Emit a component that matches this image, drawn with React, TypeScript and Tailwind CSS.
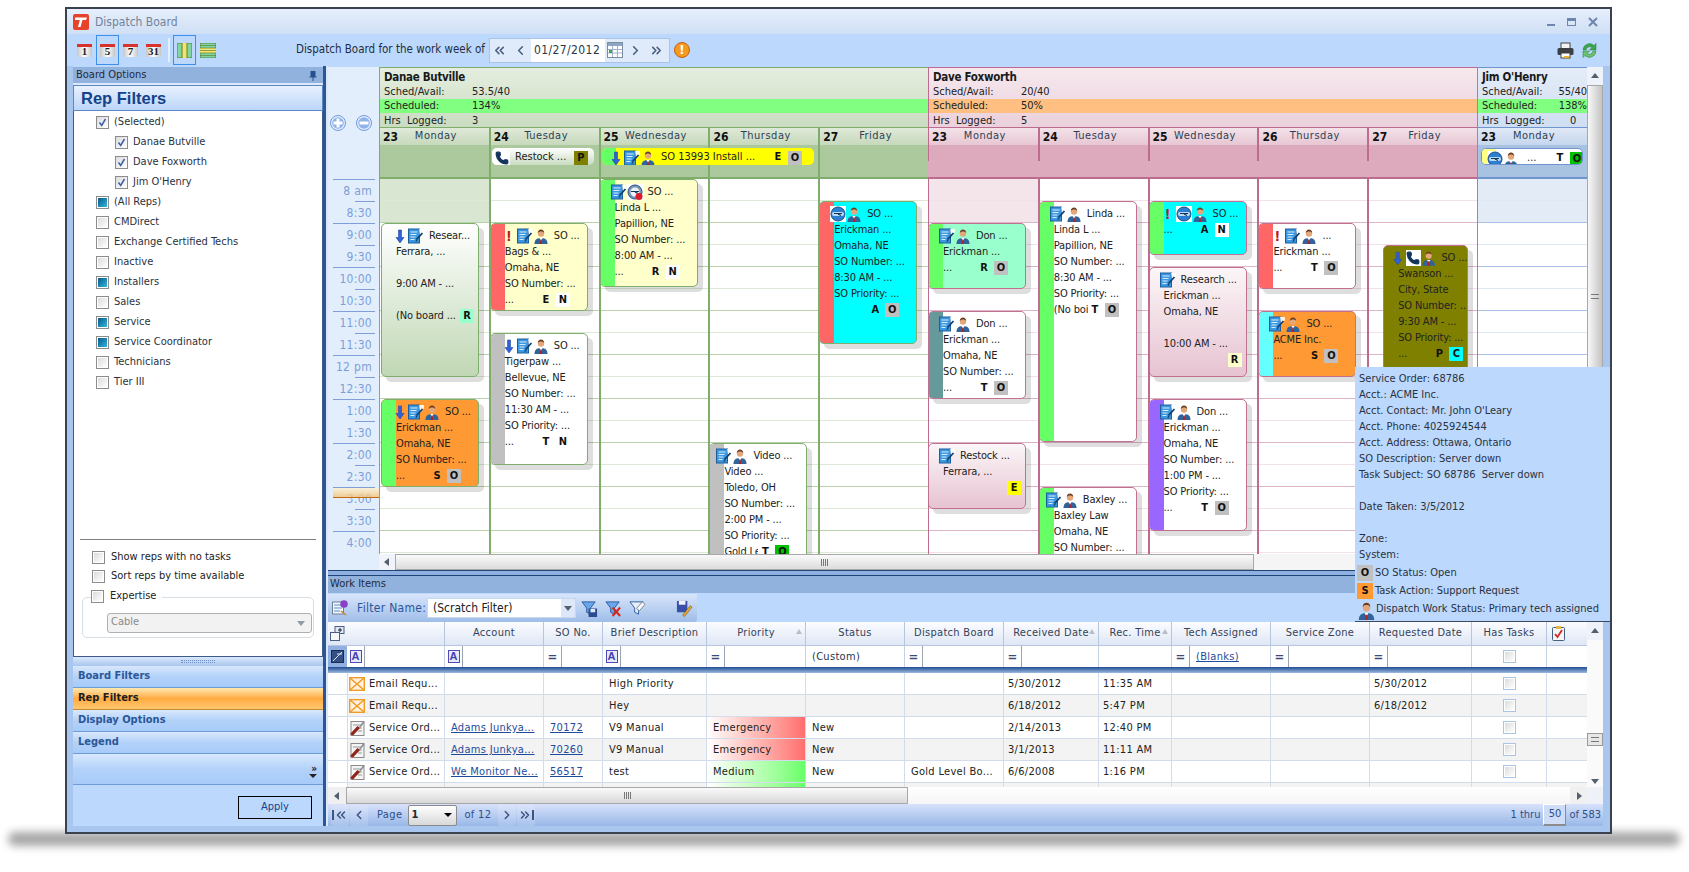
import { ChevronLeft, ChevronRight, ChevronsLeft, ChevronsRight, Phone } from "lucide-react";
import clsx from "clsx";

type Theme = {
  head: string;
  bar: string;
  line: string;
  dayHead: string;
  band: string;
  off: string;
  light: string;
  dark: string;
  border: string;
};

type IconName = "arrow" | "doc" | "person" | "clock" | "clockRed" | "phone" | "bang";

type CardData = {
  slot: number;
  h: number;
  left?: number;
  w?: number;
  fill: string;
  bar?: string;
  icons: IconName[];
  title: string;
  tight?: boolean;
  lines: string[];
  foot?: string;
  letter?: string;
  box: string;
  boxFill: string;
};

const danae: Theme = {
  head: "bg-linear-to-b from-[#e6eedf] to-[#c9dcc0]",
  bar: "bg-[#80ff80]",
  line: "border-[#7fad6b]",
  dayHead: "bg-linear-to-b from-[#dfe9d8] to-[#c4d7b9]",
  band: "bg-[#abc99c]",
  off: "bg-[#d9e6d2]",
  light: "border-[#dde9d6]",
  dark: "border-[#b9d0ad]",
  border: "border-[#7fad6b]",
};

const dave: Theme = {
  head: "bg-linear-to-b from-[#f6e9ee] to-[#ead0db]",
  bar: "bg-[#ffbf80]",
  line: "border-[#bd6b8e]",
  dayHead: "bg-linear-to-b from-[#f3e2e9] to-[#e5c3d0]",
  band: "bg-[#dca9bd]",
  off: "bg-[#f4e5eb]",
  light: "border-[#f1e1e8]",
  dark: "border-[#dcb5c6]",
  border: "border-[#c2708f]",
};

const jim: Theme = {
  head: "bg-linear-to-b from-[#e4ecf8] to-[#cfdef2]",
  bar: "bg-[#80ff80]",
  line: "border-[#6f94cf]",
  dayHead: "bg-linear-to-b from-[#e0e9f6] to-[#c2d4ec]",
  band: "bg-[#a8c3e2]",
  off: "bg-[#e3ebf6]",
  light: "border-[#dfe8f5]",
  dark: "border-[#a9c1e6]",
  border: "border-[#6f94cf]",
};

const white = "bg-white";
const yellow = "bg-[#ffffcc]";
const orange = "bg-[#ff9933]";
const cyan = "bg-[#00ffff]";
const mint = "bg-[#99ffcc]";
const olive = "bg-[#808000]";
const greenFade = "bg-linear-to-b from-white to-[#c0d7b4]";
const pinkFade = "bg-linear-to-b from-[#fbf6f8] to-[#e6c3d1]";
const lime = "bg-[#66ff66]";
const red = "bg-[#ff6666]";
const gray = "bg-[#c0c0c0]";
const boxGray = "bg-[#c0c0c0]";
const boxWhite = "bg-white";

const danaeCards: CardData[][] = [
  [
    { slot: 2, h: 154, left: 1, fill: greenFade, icons: ["arrow", "doc"], title: "Resear...", lines: ["Ferrara, ...", "", "9:00 AM - ...", ""], foot: "(No board ...", box: "R", boxFill: mint },
    { slot: 10, h: 88, left: 1, fill: orange, bar: lime, icons: ["arrow", "doc", "person"], title: "SO ...", lines: ["Erickman ...", "Omaha, NE", "SO Number: ..."], foot: "...", letter: "S", box: "O", boxFill: boxGray },
  ],
  [
    { slot: 2, h: 88, fill: yellow, bar: red, icons: ["bang", "doc", "person"], title: "SO ...", lines: ["Bags & ...", "Omaha, NE", "SO Number: ..."], foot: "...", letter: "E", box: "N", boxFill: boxWhite },
    { slot: 7, h: 132, fill: white, bar: gray, icons: ["arrow", "doc", "person"], title: "SO ...", lines: ["Tigerpaw ...", "Bellevue, NE", "SO Number: ...", "11:30 AM - ...", "SO Priority: ..."], foot: "...", letter: "T", box: "N", boxFill: boxWhite },
  ],
  [
    { slot: 0, h: 108, fill: yellow, bar: lime, icons: ["doc", "clockRed"], title: "SO ...", lines: ["Linda L ...", "Papillion, NE", "SO Number: ...", "8:00 AM - ..."], foot: "...", letter: "R", box: "N", boxFill: boxWhite },
  ],
  [
    { slot: 12, h: 132, fill: white, bar: gray, tight: true, icons: ["doc", "person"], title: "Video ...", lines: ["Video ...", "Toledo, OH", "SO Number: ...", "2:00 PM - ...", "SO Priority: ..."], foot: "Gold Le:", letter: "T", box: "O", boxFill: "bg-[#00c000]" },
  ],
  [
    { slot: 1, h: 143, fill: cyan, bar: red, icons: ["clock", "person"], title: "SO ...", lines: ["Erickman ...", "Omaha, NE", "SO Number: ...", "8:30 AM - ...", "SO Priority: ..."], foot: "", letter: "A", box: "O", boxFill: boxGray },
  ],
];

const daveCards: CardData[][] = [
  [
    { slot: 2, h: 66, fill: mint, bar: lime, icons: ["doc", "person"], title: "Don ...", lines: ["Erickman ..."], foot: "...", letter: "R", box: "O", boxFill: boxGray },
    { slot: 6, h: 88, fill: white, bar: "bg-[#669999]", icons: ["doc", "person"], title: "Don ...", lines: ["Erickman ...", "Omaha, NE", "SO Number: ..."], foot: "...", letter: "T", box: "O", boxFill: boxGray },
    { slot: 12, h: 66, fill: pinkFade, icons: ["doc"], title: "Restock ...", lines: ["Ferrara, ..."], box: "E", boxFill: "bg-[#ffff00]" },
  ],
  [
    { slot: 1, h: 241, fill: white, bar: lime, icons: ["doc", "person"], title: "Linda ...", lines: ["Linda L ...", "Papillion, NE", "SO Number: ...", "8:30 AM - ...", "SO Priority: ..."], foot: "(No boi", letter: "T", box: "O", boxFill: boxGray },
    { slot: 14, h: 88, fill: white, bar: lime, tight: true, icons: ["doc", "person"], title: "Baxley ...", lines: ["Baxley Law", "Omaha, NE", "SO Number: ..."], box: "", boxFill: "" },
  ],
  [
    { slot: 1, h: 54, fill: cyan, bar: lime, icons: ["bang", "clock", "person"], title: "SO ...", lines: [], foot: "...", letter: "A", box: "N", boxFill: boxWhite },
    { slot: 4, h: 110, fill: pinkFade, icons: ["doc"], title: "Research ...", lines: ["Erickman ...", "Omaha, NE", "", "10:00 AM - ..."], box: "R", boxFill: "bg-[#ffffcc]" },
    { slot: 10, h: 132, fill: white, bar: "bg-[#9966ff]", icons: ["doc", "person"], title: "Don ...", lines: ["Erickman ...", "Omaha, NE", "SO Number: ...", "1:00 PM - ...", "SO Priority: ..."], foot: "...", letter: "T", box: "O", boxFill: boxGray },
  ],
  [
    { slot: 2, h: 66, fill: white, bar: red, icons: ["bang", "doc", "person"], title: "...", lines: ["Erickman ..."], foot: "...", letter: "T", box: "O", boxFill: boxGray },
    { slot: 6, h: 66, fill: orange, bar: "bg-[#66ffff]", icons: ["doc", "person"], title: "SO ...", lines: ["ACME Inc."], foot: "...", letter: "S", box: "O", boxFill: boxGray },
  ],
  [
    { slot: 3, h: 132, left: 14, w: 85, fill: olive, tight: true, icons: ["arrow", "phone", "person"], title: "SO ...", lines: ["Swanson ...", "City, State", "SO Number: ...", "9:30 AM - ...", "SO Priority: ..."], foot: "...", letter: "P", box: "C", boxFill: "bg-[#00ffff]" },
  ],
];

const times = ["8 am", "8:30", "9:00", "9:30", "10:00", "10:30", "11:00", "11:30", "12 pm", "12:30", "1:00", "1:30", "2:00", "2:30", "3:00", "3:30", "4:00"];
const reps = [
  { label: "(Selected)", kind: "check", sub: false },
  { label: "Danae Butville", kind: "check", sub: true },
  { label: "Dave Foxworth", kind: "check", sub: true },
  { label: "Jim O'Henry", kind: "check", sub: true },
  { label: "(All Reps)", kind: "fill", sub: false },
  { label: "CMDirect", kind: "none", sub: false },
  { label: "Exchange Certified Techs", kind: "none", sub: false },
  { label: "Inactive", kind: "none", sub: false },
  { label: "Installers", kind: "fill", sub: false },
  { label: "Sales", kind: "none", sub: false },
  { label: "Service", kind: "fill", sub: false },
  { label: "Service Coordinator", kind: "fill", sub: false },
  { label: "Technicians", kind: "none", sub: false },
  { label: "Tier III", kind: "none", sub: false },
];

const gridCols = "grid grid-cols-[19px_98px_99px_59px_104px_99px_99px_99px_95px_73px_99px_99px_102px_75px_40px]";

const columns = [
  { t: "Account" },
  { t: "SO No." },
  { t: "Brief Description" },
  { t: "Priority", sort: true },
  { t: "Status" },
  { t: "Dispatch Board" },
  { t: "Received Date", sort: true },
  { t: "Rec. Time", sort: true },
  { t: "Tech Assigned" },
  { t: "Service Zone" },
  { t: "Requested Date" },
  { t: "Has Tasks" },
];

const workItems = [
  { icon: "mail", type: "Email Requ...", account: "", so: "", brief: "High Priority", priority: "", status: "", board: "", date: "5/30/2012", time: "11:35 AM", req: "5/30/2012" },
  { icon: "mail", type: "Email Requ...", account: "", so: "", brief: "Hey", priority: "", status: "", board: "", date: "6/18/2012", time: "5:47 PM", req: "6/18/2012" },
  { icon: "tool", type: "Service Ord...", account: "Adams Junkya...", so: "70172", brief: "V9 Manual", priority: "Emergency", status: "New", board: "", date: "2/14/2013", time: "12:40 PM", req: "" },
  { icon: "tool", type: "Service Ord...", account: "Adams Junkya...", so: "70260", brief: "V9 Manual", priority: "Emergency", status: "New", board: "", date: "3/1/2013", time: "11:11 AM", req: "" },
  { icon: "tool", type: "Service Ord...", account: "We Monitor Ne...", so: "56517", brief: "test", priority: "Medium", status: "New", board: "Gold Level Bo...", date: "6/6/2008", time: "1:16 PM", req: "" },
  { icon: "tool", type: "", account: "", so: "", brief: "", priority: "Medium", status: "", board: "", date: "", time: "", req: "" },
];

function DocIcon() {
  return (
    <svg viewBox="0 0 16 16" className="h-4 w-4">
      <rect x="0.5" y="1" width="11" height="14" fill="#3b97e0" stroke="#1c5f9e" />
      <path d="M2.5 4h7M2.5 6.5h6M2.5 9h5M2.5 11.5h4" stroke="#d8eefc" />
      <path d="M11 1h5v3l-4 5z" fill="#fff" opacity="0.85" />
      <path d="M8.5 11.5l6-6.5" stroke="#12406e" strokeWidth="1.8" />
      <path d="M7.5 14l.6-2.5 1.8 1.6z" fill="#12406e" />
    </svg>
  );
}

function PersonIcon({ className = "h-4 w-4" }: { className?: string }) {
  return (
    <svg viewBox="0 0 16 16" className={className}>
      <path d="M1.5 16c0-4 2-6 6.5-6s6.500 2 6.500 6z" fill="#2f6399" />
      <path d="M6.300 10h3.400L8 13z" fill="#fff" />
      <path d="M7.400 11.500h1.200l.5 4.500H6.900z" fill="#b3202a" />
      <circle cx="8" cy="5.600" r="3.200" fill="#e3a77c" />
      <path d="M4.800 5c0-2.400 1.400-3.600 3.200-3.600s3.200 1.200 3.200 3.600c-1-1.300-2-1.600-3.200-1.600S5.800 3.700 4.800 5z" fill="#6b3d22" />
    </svg>
  );
}

function ArrowIcon() {
  return (
    <svg viewBox="0 0 16 16" className="h-4 w-4">
      <path d="M6.500 2h3v7.500h2.500L8 15 4 9.500h2.500z" fill="#2e62dc" stroke="#23489c" strokeWidth="0.600" />
    </svg>
  );
}

function ClockIcon({ warn }: { warn?: boolean }) {
  return (
    <svg viewBox="0 0 16 16" className="h-4 w-4">
      <rect width="16" height="16" fill="#fff" />
      <circle cx="8" cy="8" r="7" fill={warn ? "#7e97b4" : "#2c7fd0"} stroke="#1c4f86" />
      {warn ? <circle cx="8" cy="8" r="4.500" fill="#eef3f8" /> : <rect x="2" y="6" width="12" height="4" rx="2" fill="#bcdcf5" />}
      <path d="M4 7.500h8M8 8l3 1.500" stroke="#10365e" strokeWidth="1.200" />
      {warn && <circle cx="12" cy="12.500" r="3.500" fill="#d91d2a" />}
    </svg>
  );
}

function CardIcon({ name }: { name: IconName }) {
  if (name === "doc") return <DocIcon />;
  if (name === "person") return <PersonIcon />;
  if (name === "arrow") return <ArrowIcon />;
  if (name === "clock") return <ClockIcon />;
  if (name === "clockRed") return <ClockIcon warn />;
  if (name === "phone")
    return (
      <span className="flex h-4 w-4 items-center justify-center bg-white">
        <Phone className="h-3.5 w-3.5 fill-[#12365c] text-[#12365c]" />
      </span>
    );
  return <span className="block w-4 text-center text-[14px] leading-4 font-bold text-[#c01818]">!</span>;
}

function Card({ c, theme }: { c: CardData; theme: Theme }) {
  return (
    <div
      className={clsx("absolute overflow-hidden rounded-[5px] border shadow-[5px_5px_0_0_rgba(0,0,0,0.13)]", theme.border, c.fill)}
      style={{ top: c.slot * 22, height: c.h, left: c.left ?? -1, width: c.w ?? 98 }}
    >
      {c.bar && <span className={clsx("absolute inset-y-0 left-0 w-[14px]", c.bar)} />}
      <div className="relative pt-[4px] leading-4 tracking-[-0.15px] whitespace-nowrap text-[#222]">
        <div className={clsx("flex h-4", c.tight ? "pl-[6px]" : "pl-[10px]")}>
          {c.icons.map((name, i) => (
            <CardIcon key={i} name={name} />
          ))}
          <span className="ml-[5px]">{c.title}</span>
        </div>
        {c.lines.map((line, i) => (
          <div key={i} className="h-4 pl-[14px]">
            {line}
          </div>
        ))}
        {c.box && (
          <div className={clsx("flex h-4 items-center", !c.letter && "pr-[4px]")}>
            {c.letter ? (
              <>
                <span className="w-[48px] overflow-hidden pl-[14px]">{c.foot}</span>
                <b className="w-[14px] text-center text-[#111]">{c.letter}</b>
                <span className="w-[3px]" />
              </>
            ) : (
              <span className="flex-1 overflow-hidden pl-[14px]">{c.foot}</span>
            )}
            <b className={clsx("h-[14px] w-[14px] text-center leading-[14px] text-[#111]", c.boxFill)}>{c.box}</b>
          </div>
        )}
      </div>
    </div>
  );
}

function AllDay({ className, bar, children }: { className: string; bar: string; children: React.ReactNode }) {
  return (
    <div className={clsx("absolute top-[3px] flex h-[17px] overflow-hidden rounded-[5px] pt-[2px] whitespace-nowrap text-[#222]", className)}>
      <span className={clsx("absolute inset-y-0 left-0 w-[14px]", bar)} />
      <div className="relative flex h-[15px] items-center">{children}</div>
    </div>
  );
}

function RepColumn({
  theme,
  width,
  name,
  sched,
  pct,
  hrs,
  days,
  cards,
  children,
}: {
  theme: Theme;
  width: string;
  name: string;
  sched: string;
  pct: string;
  hrs: string;
  days: { n: string; d: string }[];
  cards: CardData[][];
  children: React.ReactNode;
}) {
  const wide = width === "w-[110px]" ? "w-[550px]" : "";
  return (
    <div className={clsx("flex shrink-0 flex-col overflow-hidden", width)}>
      <div className={clsx("h-[60px] border-t border-l whitespace-nowrap", theme.line, theme.head)}>
        <div className="h-[17px] pl-[4px] text-[11.500px] leading-[18px] font-bold tracking-[-0.3px] text-[#1a1a1a]">{name}</div>
        <div className="flex h-[14px] pl-[4px] leading-[14px]">
          <span className="w-[88px]">Sched/Avail:</span>
          <span>{sched}</span>
        </div>
        <div className={clsx("flex h-[14px] pl-[4px] leading-[14px]", theme.bar)}>
          <span className="w-[88px]">Scheduled:</span>
          <span>{pct}</span>
        </div>
        <div className="flex h-[15px] pl-[4px] leading-[16px]">
          <span className="w-[88px]">Hrs &nbsp;Logged:</span>
          <span>{hrs}</span>
        </div>
      </div>
      <div className={clsx("grid h-[18px] grid-cols-5 border-t", theme.line, wide)}>
        {days.map((day, i) => (
          <div key={day.n} className={clsx("flex items-center", i === 0 ? "border-l" : "border-l-2", theme.line, theme.dayHead)}>
            <b className="w-0 pl-[3px] text-[12px] whitespace-nowrap text-[#111]">{day.n}</b>
            <span className="flex-1 pb-[2px] text-center tracking-[0.5px] text-[#2d3f55]">{day.d}</span>
          </div>
        ))}
      </div>
      <div className={clsx("relative grid h-[34px] grid-cols-5 border-b-2", theme.line, theme.band, wide)}>
        {days.map((day, i) => (
          <div key={day.n} className={clsx(i === 0 ? "border-l" : "border-l-2", theme.line)} />
        ))}
        {children}
      </div>
      <div className={clsx("grid h-[375px] grid-cols-5 overflow-hidden bg-white", wide)}>
        {days.map((day, i) => (
          <div key={day.n} className={clsx("relative", i === 0 ? "border-l" : "border-l-2", theme.line)}>
            {times.map((t, r) => (
              <div
                key={t}
                className={clsx(
                  "h-[22px] border-b",
                  r % 2 ? theme.dark : theme.light,
                  i === 0 && r < 2 && theme.off
                )}
              />
            ))}
            {(cards[i] || []).map((c, k) => (
              <Card key={k} c={c} theme={theme} />
            ))}
          </div>
        ))}
      </div>
    </div>
  );
}

function CalendarIcon({ text }: { text: string }) {
  return (
    <div className="w-[15px]">
      <div className="h-[3px] bg-[#d8322c]" />
      <div className="flex h-[10px] items-center justify-center bg-linear-to-r from-[#c6c6c6] via-white to-[#c6c6c6] [font-family:'Liberation_Serif',serif] text-[11px] font-bold text-[#222]">
        {text}
      </div>
    </div>
  );
}

function ToolBox({ on, children }: { on?: boolean; children: React.ReactNode }) {
  return (
    <div className={clsx("flex h-[30px] w-[23px] items-center justify-center", on && "border border-[#3f8fe6]")}>{children}</div>
  );
}

function Check({ kind }: { kind: string }) {
  return (
    <span className="flex h-[13px] w-[13px] shrink-0 items-center justify-center border border-[#8c8c8c] bg-white">
      {kind === "fill" && <span className="h-[9px] w-[9px] bg-linear-to-br from-[#0d5b8f] to-[#2fb6dc]" />}
      {kind === "none" && <span className="h-[9px] w-[9px] bg-linear-to-br from-[#dcdcdc] to-white" />}
      {kind === "check" && (
        <svg viewBox="0 0 11 11" className="h-[11px] w-[11px] bg-linear-to-br from-[#dcdcdc] to-white">
          <path d="M2.500 5.500l2.200 3L8.500 2" fill="none" stroke="#3c5ea8" strokeWidth="1.500" />
        </svg>
      )}
    </span>
  );
}

function BlueCheck() {
  return (
    <span className="flex h-[13px] w-[13px] items-center justify-center border border-[#a9c4e4] bg-white">
      <span className="h-[9px] w-[9px] bg-linear-to-br from-[#dcdcdc] to-white" />
    </span>
  );
}

function Triangle({ dir, className }: { dir: "up" | "down" | "left" | "right"; className?: string }) {
  const d = { up: "M0 6h8L4 1z", down: "M0 2h8L4 7z", left: "M6 0v8L1 4z", right: "M2 0v8l5-4z" }[dir];
  return (
    <svg viewBox="0 0 8 8" className={clsx("h-2 w-2", className)}>
      <path d={d} fill="#55606e" />
    </svg>
  );
}

function Grip() {
  return (
    <span className="flex gap-px">
      <i className="h-[7px] w-px bg-[#777]" />
      <i className="h-[7px] w-px bg-[#777]" />
      <i className="h-[7px] w-px bg-[#777]" />
      <i className="h-[7px] w-px bg-[#777]" />
    </span>
  );
}

function MailIcon() {
  return (
    <svg viewBox="0 0 16 14" className="h-[14px] w-[16px] shrink-0">
      <rect x="0.700" y="0.700" width="14.600" height="12.600" fill="#fff3e0" stroke="#f09a28" strokeWidth="1.400" />
      <path d="M1 1l14 12M15 1L1 13" stroke="#f09a28" strokeWidth="1.600" />
    </svg>
  );
}

function ToolIcon() {
  return (
    <svg viewBox="0 0 16 16" className="h-4 w-4 shrink-0">
      <rect x="2" y="1.500" width="13" height="14" fill="#f4f4f4" stroke="#8a8a8a" />
      <path d="M4 5h9M7 8h6M9 11h4" stroke="#999" />
      <path d="M1 14l3 1.500 7-7.500-2.500-2z" fill="#8f2418" />
      <path d="M10 7l4-5.500 1.500 1L11 8z" fill="#8a8f96" />
    </svg>
  );
}

function FunnelIcon({ mark }: { mark: "disk" | "x" | "erase" }) {
  return (
    <svg viewBox="0 0 18 18" className="h-[17px] w-[17px]">
      <path d="M1 2h14L10 8.500V15l-4-2V8.500z" fill={mark === "erase" ? "#e8eef8" : "#6aa6e8"} stroke="#2b5a9e" />
      {mark === "disk" && (
        <>
          <rect x="8" y="9" width="9" height="9" fill="#2b4a8f" />
          <rect x="10" y="9.500" width="5" height="3.500" fill="#dfe9f8" />
        </>
      )}
      {mark === "x" && <path d="M8 8l8 9M16 8l-8 9" stroke="#d8281c" strokeWidth="2.200" />}
      {mark === "erase" && <path d="M8 9l6-7 3 2.500-6 7z" fill="#f8f8f8" stroke="#7a8794" />}
    </svg>
  );
}

function AButton() {
  return (
    <span className="flex h-[13px] w-[12px] items-center justify-center border border-[#4d4db5] bg-[#e8e8fa] [font-family:'Liberation_Sans',sans-serif] text-[11px] leading-none text-[#3f3fb0]">
      A
    </span>
  );
}

function OpCell({ a, children }: { a?: boolean; children?: React.ReactNode }) {
  return (
    <div className="flex h-full min-w-0 border-r border-[#c5d2e4]">
      <span className="flex w-[18px] shrink-0 items-center justify-center border-r border-[#9aa5b3] text-[13px] font-bold text-[#3b4a7a]">
        {a ? <AButton /> : "="}
      </span>
      <span className="pl-[6px] leading-[21px]">{children}</span>
    </div>
  );
}

function NavCell({ children, className }: { children?: React.ReactNode; className?: string }) {
  return <span className={clsx("flex h-[21px] w-[18px] items-center justify-center rounded-[2px] bg-white/15 text-[#3c5580]", className)}>{children}</span>;
}

export default function App() {
  return (
    <div className="relative h-[872px] w-[1689px] overflow-hidden bg-white [font-family:'DejaVu_Sans_Condensed','DejaVu_Sans',sans-serif] text-[11px] [font-stretch:condensed] text-[#222]">
      <div className="absolute top-[832px] left-[8px] h-[14px] w-[1672px] rounded-full bg-[#a6a6a6] blur-[4px]" />

      <div className="relative mt-[7px] ml-[65px] flex h-[827px] w-[1547px] flex-col border-2 border-[#39424e] bg-[#a9c6ee]">
        {/* title bar */}
        <div className="flex h-[25px] shrink-0 items-center bg-linear-to-b from-[#e6effb] to-[#cfdff5] pr-[12px] pl-[6px]">
          <svg viewBox="0 0 16 16" className="h-[16px] w-[16px]">
            <rect width="16" height="16" rx="2" fill="#e8432a" />
            <path d="M2 3.500h12l-1 2.500H9.500L7.500 13H5l1.800-7H2z" fill="#fff" />
          </svg>
          <span className="ml-[6px] text-[12px] text-[#71839b]">Dispatch Board</span>
          <div className="ml-auto flex items-center gap-[12px] text-[#6c86ad]">
            <span className="mt-[6px] h-[2px] w-[8px] bg-[#6c86ad]" />
            <span className="h-[8px] w-[9px] border border-t-[3px] border-[#6c86ad]" />
            <svg viewBox="0 0 10 10" className="h-[10px] w-[10px]">
              <path d="M1 1l8 8M9 1L1 9" stroke="#6c86ad" strokeWidth="2" />
            </svg>
          </div>
        </div>

        {/* toolbar */}
        <div className="flex h-[32px] shrink-0 items-center bg-[#bcd9fd] pr-[12px] pl-[6px]">
          <ToolBox><CalendarIcon text="1" /></ToolBox>
          <ToolBox on><CalendarIcon text="5" /></ToolBox>
          <ToolBox><CalendarIcon text="7" /></ToolBox>
          <ToolBox><CalendarIcon text="31" /></ToolBox>
          <span className="mx-[3px] h-[24px] w-[2px] bg-[#e4effd]" />
          <ToolBox on>
            <svg viewBox="0 0 15 15" className="h-[15px] w-[15px]">
              <rect width="15" height="15" fill="#7fd6a0" stroke="#5f7f3a" />
              <rect x="5" width="5" height="15" fill="#f3e36c" />
              <path d="M5 0v15M10 0v15" stroke="#5f7f3a" />
            </svg>
          </ToolBox>
          <ToolBox>
            <svg viewBox="0 0 16 15" className="h-[15px] w-[16px]">
              <rect width="16" height="15" fill="#7fd6a0" stroke="#5f7f3a" />
              <rect y="5" width="16" height="5" fill="#f3e36c" />
              <path d="M0 2.500h16M0 5h16M0 7.500h16M0 10h16M0 12.500h16" stroke="#5f7f3a" strokeWidth="0.700" />
            </svg>
          </ToolBox>
          <span className="ml-[77px] text-[11.500px] text-[#1f2d3d]">Dispatch Board for the work week of</span>
          <div className="ml-[4px] flex h-[25px] w-[181px] items-center border border-[#a9c4e8] bg-[#dfeafa] text-[#4a5f80]">
            <ChevronsLeft className="ml-[2px] h-[15px] w-[15px]" strokeWidth={2.500} />
            <ChevronLeft className="ml-[6px] h-[15px] w-[15px]" strokeWidth={2.500} />
            <span className="ml-[3px] flex h-full w-[74px] items-center bg-white pl-[3px] text-[12px] tracking-[0.4px] text-[#2a3646]">01/27/2012</span>
            <svg viewBox="0 0 16 16" className="ml-[2px] h-[16px] w-[16px]">
              <rect x="0.500" y="0.500" width="15" height="15" fill="#fff" stroke="#7c8ca3" />
              <rect x="1" y="1" width="14" height="3" fill="#8ea6c6" />
              <path d="M5.500 4v11M10.500 4v11M1 7.500h14M1 11h14" stroke="#9fb2cc" />
              <rect x="2" y="8" width="3" height="3" fill="#35b040" />
            </svg>
            <ChevronRight className="ml-[5px] h-[15px] w-[15px]" strokeWidth={2.500} />
            <ChevronsRight className="ml-[6px] h-[15px] w-[15px]" strokeWidth={2.500} />
          </div>
          <span className="ml-[4px] flex h-[16px] w-[16px] items-center justify-center rounded-full border border-[#c45f10] bg-[#f59a1d] text-[13px] font-bold text-white">!</span>
          <div className="ml-auto flex items-center gap-[7px]">
            <svg viewBox="0 0 17 17" className="h-[17px] w-[17px]">
              <rect x="4" y="1" width="9" height="6" fill="#f3f3f3" stroke="#444" />
              <rect x="0.500" y="6" width="16" height="7" rx="1.500" fill="#3c3f44" />
              <rect x="4" y="11" width="9" height="5" fill="#fff" stroke="#444" />
              <rect x="7" y="14" width="5" height="2" fill="#e6b22e" />
            </svg>
            <svg viewBox="0 0 17 17" className="h-[17px] w-[17px]">
              <path d="M2 8a6.500 6.500 0 0 1 11-4.500L15 1.500V8H8.500l2.500-2.500A3.800 3.800 0 0 0 5 8z" fill="#3ea650" stroke="#1f7a34" strokeWidth="0.500" />
              <path d="M15 9a6.500 6.500 0 0 1-11 4.500L2 15.500V9h6.500L6 11.500A3.800 3.800 0 0 0 12 9z" fill="#6cc272" stroke="#1f7a34" strokeWidth="0.500" />
            </svg>
          </div>
        </div>

        {/* main */}
        <div className="relative flex h-[760px] shrink-0 pr-[7px] pl-[6px]">
          {/* left panel */}
          <div className="flex w-[250px] shrink-0 flex-col bg-[#bcd9fd] pt-px">
            <div className="flex h-[16px] items-center justify-between bg-[#92b2de] pr-[6px] pl-[3px] text-[#1d2a3a]">
              <span>Board Options</span>
              <svg viewBox="0 0 8 11" className="h-[11px] w-[8px]">
                <path d="M1.500 1h5v5.500H7.500V7.500H4.500V11H3.500V7.500H.5V6.500h1z" fill="#26508c" />
              </svg>
            </div>
            <div className="h-[2px] bg-[#dde9fb]" />
            <div className="flex h-[26px] items-center border border-[#5e88c4] bg-linear-to-b from-[#e8f1fe] to-[#bcd6f8] pl-[7px] [font-family:'Liberation_Sans',sans-serif] text-[16.500px] font-bold text-[#15428b]">
              Rep Filters
            </div>
            <div className="flex h-[546px] flex-col border-x border-b border-[#3e5a8a] bg-white pt-px">
              <div className="flex-1">
                {reps.map((r) => (
                  <div key={r.label} className={clsx("flex h-[20px] items-center gap-[5px]", r.sub ? "pl-[41px]" : "pl-[22px]")}>
                    <Check kind={r.kind} />
                    <span className="text-[#2a3140]">{r.label}</span>
                  </div>
                ))}
              </div>
              <div className="mx-[6px] h-px bg-[#808080]" />
              <div className="pt-[8px] pl-[18px]">
                <div className="flex h-[19px] items-center gap-[6px]"><Check kind="none" /><span>Show reps with no tasks</span></div>
                <div className="flex h-[19px] items-center gap-[6px]"><Check kind="none" /><span>Sort reps by time available</span></div>
              </div>
              <div className="mx-[8px] mt-[11px] mb-[18px] h-[41px] rounded-[5px] border border-[#d5dfe5]">
                <div className="mt-[-10px] ml-[8px] flex w-fit items-center gap-[6px] bg-white pr-[6px]"><Check kind="none" /><span>Expertise</span></div>
                <div className="mt-[8px] ml-[24px] flex h-[20px] w-[205px] items-center justify-between rounded-[3px] border border-[#b0b0b0] bg-[#f2f2f2] pr-[6px] pl-[3px] text-[#8a8a8a]">
                  <span>Cable</span>
                  <Triangle dir="down" className="opacity-60" />
                </div>
              </div>
            </div>
            <div className="flex h-[9px] items-center justify-center bg-linear-to-b from-[#dbe8fb] to-[#a9c6ee]">
              <span className="h-[3px] w-[34px] border-y border-dotted border-[#6f8fc4]" />
            </div>
            {["Board Filters", "Rep Filters", "Display Options", "Legend"].map((label) => {
              const on = label === "Rep Filters";
              return (
                <div
                  key={label}
                  className={clsx(
                    "flex h-[22px] items-center border-b pl-[5px] font-bold",
                    on
                      ? "border-[#c58b33] bg-linear-to-b from-[#ffe8ae] via-[#ffab3f] to-[#ffc76f] text-[#1c1c1c]"
                      : "border-[#6f9bd6] bg-linear-to-b from-[#d9e8fc] via-[#b3d2fa] to-[#a7cbf9] text-[#2b5797]"
                  )}
                >
                  {label}
                </div>
              );
            })}
            <div className="flex h-[31px] flex-col items-end justify-end border-b border-[#6f9bd6] bg-linear-to-b from-[#d9e8fc] via-[#b3d2fa] to-[#a7cbf9] pr-[6px] pb-[6px]">
              <span className="text-[10px] leading-[9px] font-bold text-[#222]">»</span>
              <span className="mt-[1px] h-0 w-0 border-x-[4px] border-t-[4px] border-x-transparent border-t-[#222]" />
            </div>
            <div className="flex justify-end pt-[11px] pr-[11px]">
              <button className="h-[23px] w-[74px] border border-black bg-[#bcd9fd] text-[#15428b]">Apply</button>
            </div>
          </div>

          {/* divider */}
          <div className="w-[3px] shrink-0 bg-[#2b5797]" />
          <div className="w-[2px] shrink-0 bg-[#dbe8fb]" />

          {/* right side */}
          <div className="flex w-[1275px] shrink-0 flex-col bg-[#bcd9fd]">
            <div className="h-px bg-[#bcd9fd]" />
            <div className="flex h-[487px] shrink-0">
              {/* time column */}
              <div className="flex w-[51px] shrink-0 flex-col bg-[#e3eefd]">
                <div className="flex h-[112px] items-center gap-[10px] pl-[2px]">
                  <svg viewBox="0 0 16 16" className="h-4 w-4">
                    <circle cx="8" cy="8" r="7.500" fill="#e6effc" stroke="#6f9ae0" />
                    <circle cx="8" cy="8" r="5.800" fill="#8fb3ea" />
                    <path d="M8 3.500v9M3.500 8h9" stroke="#fff" strokeWidth="3" />
                  </svg>
                  <svg viewBox="0 0 16 16" className="h-4 w-4">
                    <circle cx="8" cy="8" r="7.500" fill="#e6effc" stroke="#6f9ae0" />
                    <circle cx="8" cy="8" r="5.800" fill="#8fb3ea" />
                    <path d="M3.500 8h9" stroke="#fff" strokeWidth="3" />
                  </svg>
                </div>
                {times.map((t, i) => (
                  <div key={t} className="relative h-[22px]">
                    <div className={clsx("mr-[4px] h-px bg-[#7f9fd6]", i % 2 ? "ml-[27px]" : "ml-[5px]")} />
                    <div className="pt-[3px] pr-[7px] text-right text-[12px] leading-[16px] tracking-[0.3px] text-[#7d9fd6]">{t}</div>
                    {t === "3:00" && <div className="absolute top-px right-0 left-[5px] h-[10px] border-b border-[#c66a10] bg-linear-to-b from-[#fdf2d0]/80 to-[#f3c27a]/80" />}
                  </div>
                ))}
              </div>
              <RepColumn
                theme={danae}
                width="w-[549px]"
                name="Danae Butville"
                sched="53.5/40"
                pct="134%"
                hrs="3"
                days={[{ n: "23", d: "Monday" }, { n: "24", d: "Tuesday" }, { n: "25", d: "Wednesday" }, { n: "26", d: "Thursday" }, { n: "27", d: "Friday" }]}
                cards={danaeCards}
              >
                <AllDay className="left-[113px] w-[102px] bg-linear-to-b from-white to-[#c9dcc0]" bar="bg-white">
                  <span className="ml-[2px] flex h-[14px] w-[16px] items-center justify-center bg-white"><Phone className="h-3.5 w-3.5 fill-[#12365c] text-[#12365c]" /></span>
                  <span className="ml-[5px] w-[54px] overflow-hidden">Restock ...</span>
                  <b className="ml-[5px] h-[14px] w-[14px] bg-[#808000] text-center leading-[14px] text-[#111]">P</b>
                </AllDay>
                <AllDay className="left-[223px] w-[212px] bg-[#ffff00]" bar="bg-[#66ff66]">
                  <span className="ml-[6px] flex"><ArrowIcon /><DocIcon /><PersonIcon /></span>
                  <span className="ml-[5px] w-[110px]">SO 13993 Install ...</span>
                  <b className="w-[14px] text-center text-[#111]">E</b>
                  <b className="ml-[3px] h-[14px] w-[14px] bg-[#c0c0c0] text-center leading-[14px] text-[#111]">O</b>
                </AllDay>
              </RepColumn>
              <RepColumn
                theme={dave}
                width="w-[549px]"
                name="Dave Foxworth"
                sched="20/40"
                pct="50%"
                hrs="5"
                days={[{ n: "23", d: "Monday" }, { n: "24", d: "Tuesday" }, { n: "25", d: "Wednesday" }, { n: "26", d: "Thursday" }, { n: "27", d: "Friday" }]}
                cards={daveCards}
              >
                <span />
              </RepColumn>
              <RepColumn
                theme={jim}
                width="w-[110px]"
                name="Jim O'Henry"
                sched="55/40"
                pct="138%"
                hrs="0"
                days={[{ n: "23", d: "Monday" }, { n: "24", d: "Tuesday" }, { n: "25", d: "Wednesday" }, { n: "26", d: "Thursday" }, { n: "27", d: "Friday" }]}
                cards={[]}
              >
                <AllDay className="left-[4px] w-[102px] border border-[#6f94cf] bg-white" bar="bg-[#ffff80]">
                  <span className="ml-[5px] flex"><ClockIcon /><PersonIcon /></span>
                  <span className="ml-[8px] w-[26px]">...</span>
                  <b className="w-[14px] text-center text-[#111]">T</b>
                  <b className="ml-[3px] h-[14px] w-[14px] bg-[#00c000] text-center leading-[14px] text-[#111]">O</b>
                </AllDay>
              </RepColumn>
              {/* board v-scroll */}
              <div className="flex w-[16px] shrink-0 flex-col bg-[#f4f4f4]">
                <div className="flex h-[18px] items-center justify-center bg-[#eef3fb]"><Triangle dir="up" /></div>
                <div className="flex h-[422px] items-center justify-center border border-[#a8a8a8] bg-linear-to-r from-[#f8f8f8] to-[#c4c4c4]">
                  <span className="h-[5px] w-[8px] border-y border-[#777]" />
                </div>
              </div>
            </div>
            {/* board h-scroll */}
            <div className="flex h-[16px] shrink-0">
              <div className="w-[51px] bg-[#e3eefd]" />
              <div className="flex w-[16px] items-center justify-center bg-[#f0f4fa]"><Triangle dir="left" /></div>
              <div className="flex w-[859px] items-center justify-center border border-[#a8a8a8] bg-linear-to-b from-[#fafafa] to-[#dcdcdc]"><Grip /></div>
              <div className="flex-1 bg-[#f5f5f5]" />
            </div>
            {/* splitter */}
            <div className="h-[6px] shrink-0 border-y border-[#1f4478] bg-[#8fb0e0]" />
            <div className="flex h-[17px] shrink-0 items-center bg-[#92b2de] pl-[2px] text-[#1d2a3a]">Work Items</div>
            {/* filter strip */}
            <div className="flex h-[29px] shrink-0 pt-px">
              <div className="flex w-[369px] items-center rounded-br-[3px] bg-linear-to-b from-[#d8e5fb] to-[#9fbde8] pl-[4px]">
                <svg viewBox="0 0 16 16" className="h-4 w-4 shrink-0">
                  <rect x="0.500" y="2" width="11" height="12" fill="#f4f7fc" stroke="#6c7d94" />
                  <path d="M2 5h8M2 8h8M2 11h6" stroke="#4e8fd0" />
                  <circle cx="12" cy="4" r="3.800" fill="#8a3fc8" />
                  <path d="M9 11l5 4" stroke="#c08a2a" strokeWidth="1.600" />
                </svg>
                <span className="ml-[9px] w-[68px] shrink-0 text-[12px] tracking-[0.3px] whitespace-nowrap text-[#2b5797]">Filter Name:</span>
                <div className="ml-[2px] flex h-[20px] w-[149px] shrink-0 items-center justify-between border border-[#c6d8ef] bg-white pl-[5px] text-[12px] text-[#222]">
                  <span>(Scratch Filter)</span>
                  <span className="flex h-full w-[14px] items-center justify-center bg-[#dce8fa]"><Triangle dir="down" /></span>
                </div>
                <span className="ml-[5px]"><FunnelIcon mark="disk" /></span>
                <span className="ml-[7px]"><FunnelIcon mark="x" /></span>
                <span className="ml-[7px]"><FunnelIcon mark="erase" /></span>
                <svg viewBox="0 0 18 18" className="ml-[30px] h-[17px] w-[17px]">
                  <rect x="1" y="1" width="11" height="12" fill="#3a4fa8" />
                  <rect x="3" y="1" width="7" height="4" fill="#eef2fb" />
                  <path d="M7 16l8-10 2 1.500-8 10z" fill="#e5a92b" stroke="#5a3f10" strokeWidth="0.500" />
                </svg>
              </div>
            </div>
            {/* grid */}
            <div className="flex h-[165px] shrink-0">
              <div className="w-[1259px] shrink-0 bg-white tracking-[0.3px] whitespace-nowrap">
                <div className={clsx(gridCols, "h-[24px]")}>
                  <div className="col-span-2 flex items-center border-r border-b border-[#b8c6dd] bg-linear-to-b from-[#fbfcff] to-[#dfe7f5] pl-[2px]">
                    <svg viewBox="0 0 15 15" className="h-[15px] w-[15px]">
                      <rect x="5" y="0.500" width="9" height="7" fill="#dfe8f6" stroke="#4c5f7e" />
                      <rect x="0.500" y="6.500" width="9" height="8" fill="#f6f8fc" stroke="#4c5f7e" />
                      <path d="M8 4h4M10 2v4" stroke="#223" />
                    </svg>
                  </div>
                  {columns.map((c) => (
                    <div key={c.t} className="relative flex items-center justify-center border-r border-b border-[#b8c6dd] bg-linear-to-b from-[#fbfcff] to-[#dfe7f5] text-[#34425a]">
                      {c.t}
                      {c.sort && <span className="absolute top-[7px] right-[3px] h-0 w-0 border-x-[3px] border-b-[5px] border-x-transparent border-b-[#b8bec8]" />}
                    </div>
                  ))}
                  <div className="flex items-center border-b border-[#b8c6dd] bg-linear-to-b from-[#fbfcff] to-[#dfe7f5] pl-[5px]">
                    <svg viewBox="0 0 13 15" className="h-[15px] w-[13px]">
                      <rect x="0.500" y="1.500" width="12" height="13" rx="1" fill="#f5f5f5" stroke="#44607f" />
                      <rect x="4" y="0" width="5" height="3" fill="#e2b84c" />
                      <path d="M3 8l2.500 3L10 4" fill="none" stroke="#d6262a" strokeWidth="1.800" />
                    </svg>
                  </div>
                </div>
                <div className={clsx(gridCols, "h-[21px] items-stretch text-[#26354f]")}>
                  <div className="flex items-center justify-center bg-[#8fb0e0]">
                    <svg viewBox="0 0 13 13" className="h-[13px] w-[13px]">
                      <rect x="0.500" y="0.500" width="12" height="12" fill="#334f83" stroke="#1c2c50" />
                      <path d="M2 11L11 2M6 4h5" stroke="#dbe6f6" />
                    </svg>
                  </div>
                  <OpCell a />
                  <OpCell a />
                  <OpCell />
                  <OpCell a />
                  <OpCell />
                  <div className="border-r border-[#c5d2e4] pl-[6px] leading-[21px]">(Custom)</div>
                  <OpCell />
                  <OpCell />
                  <div className="border-r border-[#c5d2e4]" />
                  <OpCell><span className="text-[#1d4c9a] underline">(Blanks)</span></OpCell>
                  <OpCell />
                  <OpCell />
                  <div className="flex items-center justify-center border-r border-[#c5d2e4]"><BlueCheck /></div>
                  <div />
                </div>
                <div className="h-[6px] bg-linear-to-b from-[#1f4c8f] to-[#9fbbe2]" />
                <div className="h-[114px] overflow-hidden">
                  {workItems.map((w, i) => (
                    <div key={i} className={clsx(gridCols, "h-[22px] border-b border-[#d3dcea] leading-[21px]", i % 2 ? "bg-[#f3f3f3]" : "bg-white")}>
                      <div className="bg-white" />
                      <div className="flex items-center gap-[4px] border-r border-l border-[#d3dcea] pl-px">
                        {w.icon === "mail" ? <MailIcon /> : <ToolIcon />}
                        <span>{w.type}</span>
                      </div>
                      <div className="border-r border-[#d3dcea] pl-[6px] text-[#1d4c9a] underline">{w.account}</div>
                      <div className="border-r border-[#d3dcea] pl-[6px] text-[#1d4c9a] underline">{w.so}</div>
                      <div className="border-r border-[#d3dcea] pl-[6px]">{w.brief}</div>
                      <div
                        className={clsx(
                          "border-r border-[#d3dcea] pl-[6px]",
                          w.priority === "Emergency" && "bg-linear-to-r from-white to-[#ff6e6e]",
                          w.priority === "Medium" && "bg-linear-to-r from-white to-[#66ff66]"
                        )}
                      >
                        {w.priority}
                      </div>
                      <div className="border-r border-[#d3dcea] pl-[6px]">{w.status}</div>
                      <div className="border-r border-[#d3dcea] pl-[6px]">{w.board}</div>
                      <div className="border-r border-[#d3dcea] pl-[4px]">{w.date}</div>
                      <div className="border-r border-[#d3dcea] pl-[4px]">{w.time}</div>
                      <div className="border-r border-[#d3dcea]" />
                      <div className="border-r border-[#d3dcea]" />
                      <div className="border-r border-[#d3dcea] pl-[4px]">{w.req}</div>
                      <div className="flex items-center justify-center border-r border-[#d3dcea]"><BlueCheck /></div>
                      <div />
                    </div>
                  ))}
                </div>
              </div>
              <div className="flex w-[16px] shrink-0 flex-col items-center bg-[#fafafa]">
                <div className="flex h-[18px] w-full items-center justify-center bg-[#eef3fb]"><Triangle dir="up" /></div>
                <div className="mt-[93px] flex h-[13px] w-full items-center justify-center border border-[#9a9a9a] bg-[#e6e6e6]">
                  <span className="h-[5px] w-[8px] border-y border-[#777]" />
                </div>
                <div className="mt-[28px] flex h-[13px] items-center"><Triangle dir="down" /></div>
              </div>
            </div>
            {/* grid h-scroll */}
            <div className="flex h-[17px] shrink-0 bg-white">
              <div className="flex w-[18px] items-center justify-center bg-[#f0f0f0]"><Triangle dir="left" /></div>
              <div className="flex w-[562px] items-center justify-center border border-[#a8a8a8] bg-linear-to-b from-[#fafafa] to-[#d8d8d8]"><Grip /></div>
              <div className="flex-1 bg-linear-to-b from-white to-[#f5f5f5]" />
              <div className="flex w-[17px] items-center justify-center bg-[#f0f0f0]"><Triangle dir="right" /></div>
              <div className="w-[16px] bg-[#eef2f8]" />
            </div>
            {/* pager */}
            <div className="flex h-[22px] shrink-0 items-center bg-linear-to-b from-[#d8e1fb] to-[#98b8e8] pr-[2px] pl-[3px] text-[#2b4f8a]">
              <NavCell>
                <i className="h-[10px] w-[2px] bg-[#3c5580]" />
                <ChevronsLeft className="h-[14px] w-[14px]" strokeWidth={2.500} />
              </NavCell>
              <NavCell className="ml-px">
                <ChevronLeft className="h-[14px] w-[14px]" strokeWidth={2.500} />
              </NavCell>
              <span className="ml-[9px] tracking-[0.4px]">Page</span>
              <div className="ml-[5px] flex h-[21px] w-[49px] items-center justify-between rounded-[2px] border border-[#8a8a8a] bg-linear-to-b from-white to-[#d8d8d8] pr-[4px] pl-[3px] font-bold text-[#1d2a3a]">
                <span>1</span>
                <span className="h-0 w-0 border-x-[4px] border-t-[4px] border-x-transparent border-t-black" />
              </div>
              <span className="ml-[8px] tracking-[0.3px]">of 12</span>
              <NavCell className="ml-[7px]">
                <ChevronRight className="h-[14px] w-[14px]" strokeWidth={2.500} />
              </NavCell>
              <NavCell className="ml-px">
                <ChevronsRight className="h-[14px] w-[14px]" strokeWidth={2.500} />
                <i className="h-[10px] w-[2px] bg-[#3c5580]" />
              </NavCell>
              <span className="ml-auto">1 thru</span>
              <span className="mx-[3px] flex h-[22px] w-[23px] items-center justify-center border border-b-2 border-white border-r-[#8c8c8c] border-b-[#8c8c8c] bg-[#cfdcf5]">50</span>
              <span>of 583</span>
            </div>
          </div>

          {/* tooltip */}
          <div className="absolute top-[301px] right-0 h-[255px] w-[255px] border-b border-[#3b4a5e] bg-[#bcd9fd] pt-[4px] leading-4 whitespace-nowrap text-[#2a3140]">
            {["Service Order: 68786", "Acct.: ACME Inc.", "Acct. Contact: Mr. John O'Leary", "Acct. Phone: 4025924544", "Acct. Address: Ottawa, Ontario", "SO Description: Server down", "Task Subject: SO 68786  Server down", "", "Date Taken: 3/5/2012", "", "Zone:", "System:"].map((line, i) => (
              <div key={i} className="h-4 pl-[4px] whitespace-pre">{line}</div>
            ))}
            <div className="mt-[2px] flex h-[18px] items-start pl-[2px]">
              <b className="flex h-[16px] w-[16px] items-center justify-center bg-[#c0c0c0] text-[#111]">O</b>
              <span className="ml-[2px]">SO Status: Open</span>
            </div>
            <div className="flex h-[18px] items-start pl-[2px]">
              <b className="flex h-[16px] w-[16px] items-center justify-center bg-[#ff9933] text-[#111]">S</b>
              <span className="ml-[2px]">Task Action: Support Request</span>
            </div>
            <div className="flex h-[18px] items-start pl-[2px]">
              <PersonIcon className="h-[19px] w-[19px] shrink-0" />
              <span>Dispatch Work Status: Primary tech assigned</span>
            </div>
          </div>
        </div>

        <div className="h-[6px] shrink-0 bg-[#a9c6ee]" />
      </div>
    </div>
  );
}
